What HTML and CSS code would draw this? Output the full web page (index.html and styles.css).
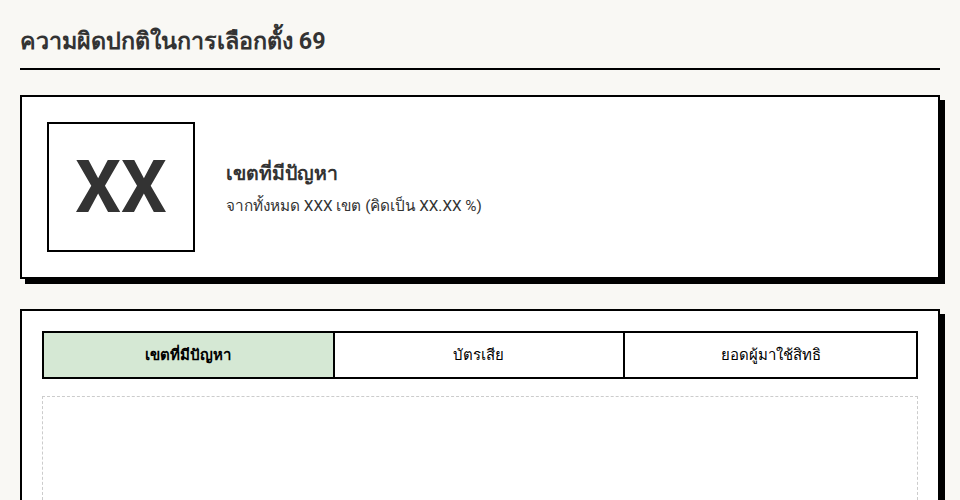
FILE: index.html
```html
<!DOCTYPE html>
<html lang="th">
<head>
<meta charset="utf-8">
<title>ความผิดปกติในการเลือกตั้ง 69</title>
<link rel="stylesheet" href="styles.css">
</head>
<body>
<div class="page">
  <h1 class="title">ความผิดปกติในการเลือกตั้ง 69</h1>
  <section class="card summary">
    <div class="badge">XX</div>
    <div class="summary-text">
      <div class="summary-head">เขตที่มีปัญหา</div>
      <div class="summary-sub">จากทั้งหมด XXX เขต (คิดเป็น XX.XX %)</div>
    </div>
  </section>
  <section class="card detail">
    <div class="tabs">
      <div class="tab active">เขตที่มีปัญหา</div>
      <div class="tab">บัตรเสีย</div>
      <div class="tab">ยอดผู้มาใช้สิทธิ</div>
    </div>
    <div class="placeholder"></div>
  </section>
</div>
</body>
</html>
```
FILE: styles.css
```css
* { box-sizing: border-box; }
html, body { margin: 0; padding: 0; }
body {
  background: #f9f8f4;
  font-family: Roboto, sans-serif;
  color: #333;
}
.page {
  padding: 21px 20px 0;
  display: flex;
  flex-direction: column;
}
.title {
  margin: 0;
  font-size: 23.3px;
  font-weight: 700;
  line-height: 40px;
  padding-bottom: 7px;
  border-bottom: 2px solid #000;
  color: #333;
}
.card {
  background: #fff;
  border: 2px solid #000;
  box-shadow: 5px 5px 0 #000;
}
.summary {
  margin-top: 25px;
  padding: 25px;
  display: flex;
  align-items: center;
  gap: 31px;
}
.badge {
  width: 148px;
  height: 130px;
  border: 2px solid #000;
  display: flex;
  align-items: center;
  justify-content: center;
  font-size: 72px;
  font-weight: 700;
  color: #333;
}
.summary-text {
  display: flex;
  flex-direction: column;
  gap: 4px;
  padding-top: 2px;
}
.summary-head {
  font-size: 19.5px;
  font-weight: 700;
  color: #333;
}
.summary-sub {
  font-size: 15.3px;
  color: #333;
}
.detail {
  margin-top: 30px;
  padding: 20px 20px 40px;
  height: 260px;
}
.tabs {
  display: grid;
  grid-template-columns: 1fr 1fr 1fr;
  border: 2px solid #000;
  height: 48px;
}
.tab {
  display: flex;
  align-items: center;
  justify-content: center;
  font-size: 15px;
  color: #000;
  background: #fff;
  border-right: 2px solid #000;
}
.tab:last-child { border-right: 0; }
.tab.active {
  background: #d5e8d4;
  font-weight: 700;
}
.placeholder {
  margin-top: 17px;
  border: 1px dashed #ccc;
  height: 200px;
}
```
